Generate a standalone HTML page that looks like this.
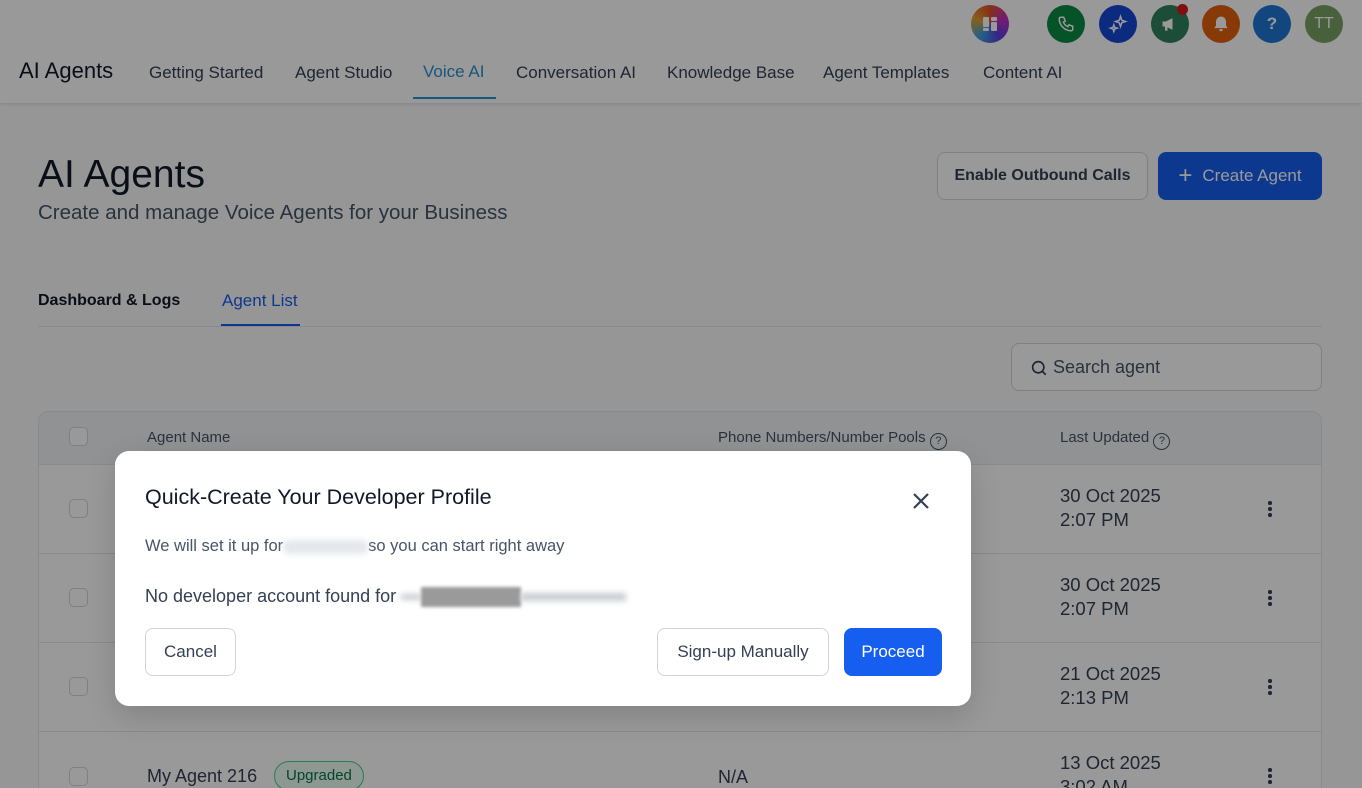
<!DOCTYPE html>
<html style="height:788px;overflow:hidden"><head><meta charset="utf-8"><style>
*{box-sizing:border-box;margin:0;padding:0}
body{width:1362px;height:788px;overflow:hidden;background:#fafafa;font-family:"Liberation Sans",sans-serif;color:#101828;position:relative}
.abs{position:absolute}
.hdr{position:absolute;left:0;top:0;width:1362px;height:103px;background:#fff;box-shadow:0 1px 3px rgba(0,0,0,.12)}
.ic{position:absolute;top:5px;width:38px;height:38px;border-radius:50%;display:flex;align-items:center;justify-content:center;color:#fff;font-size:17px}
.nav{position:absolute;top:63px;font-size:17px;color:#344054}
.btn{position:absolute;border-radius:8px;display:flex;align-items:center;justify-content:center;font-size:17px}
.row{position:absolute;left:39px;width:1283px;border-top:1px solid #e4e7ec}
.cb{position:absolute;left:69px;width:19px;height:19px;border:1.5px solid #d0d5dd;border-radius:5px;background:#fff}
.date{position:absolute;left:1060px;font-size:18.5px;color:#344054;line-height:24px}
.dots{position:absolute;left:1268px;width:4px}
.dots i{display:block;width:3.5px;height:3.5px;border-radius:50%;background:#344054;margin-bottom:2.5px}
.ov{position:absolute;left:0;top:0;width:1362px;height:788px;background:rgba(0,0,0,.4)}
.modal{position:absolute;left:115px;top:451px;width:856px;height:255px;background:#fff;border-radius:14px;box-shadow:0 10px 30px rgba(0,0,0,.15)}
.blur{display:inline-block;vertical-align:middle;filter:blur(3px)}
</style></head><body>
<div class="hdr">
  <div class="ic" style="left:971px;background:conic-gradient(#e0502a,#c02fc0,#5b3ee0,#3aa0e0,#e0a030,#e0502a)"><svg width="20" height="20" viewBox="0 0 20 20"><rect x="3" y="3" width="6" height="10" rx="1" fill="#fff"/><rect x="3" y="14" width="6" height="3" rx="1" fill="#fff"/><rect x="11" y="3" width="6" height="4" rx="1" fill="#fff"/><rect x="11" y="8" width="6" height="9" rx="1" fill="#fff"/></svg></div>
  <div class="ic" style="left:1047px;background:#0b8a44"><svg width="18" height="18" viewBox="0 0 24 24" fill="none" stroke="#fff" stroke-width="2"><path d="M5 3h4l2 5-2.5 1.5a11 11 0 0 0 6 6L16 13l5 2v4a2 2 0 0 1-2 2A16 16 0 0 1 3 5a2 2 0 0 1 2-2"/></svg></div>
  <div class="ic" style="left:1099px;background:#1447d6"><svg width="20" height="20" viewBox="0 0 24 24" fill="none" stroke="#fff" stroke-width="1.8"><path d="M15 3l1.5 4.5L21 9l-4.5 1.5L15 15l-1.5-4.5L9 9l4.5-1.5z"/><path d="M7 13l1 3 3 1-3 1-1 3-1-3-3-1 3-1z"/></svg></div>
  <div class="ic" style="left:1151px;background:#2f8060"><svg width="20" height="20" viewBox="0 0 24 24" fill="#fff"><path d="M3 9h4l8-4v14l-8-4H3z"/><rect x="6" y="15" width="3" height="5"/></svg></div>
  <div class="abs" style="left:1177px;top:4px;width:11px;height:11px;border-radius:50%;background:#d51a1a"></div>
  <div class="ic" style="left:1202px;background:#e1620c"><svg width="20" height="20" viewBox="0 0 24 24" fill="#fff"><path d="M12 3a6 6 0 0 1 6 6v5l2 3H4l2-3V9a6 6 0 0 1 6-6z"/><rect x="10" y="18" width="4" height="2.5" rx="1"/></svg></div>
  <div class="ic" style="left:1253px;background:#1d76d2;font-weight:bold">?</div>
  <div class="ic" style="left:1305px;background:#7aa066;font-size:16px">TT</div>
  <div class="abs" style="left:19px;top:58px;font-size:22px;color:#101828">AI Agents</div>
  <div class="nav" style="left:149px">Getting Started</div>
  <div class="nav" style="left:295px">Agent Studio</div>
  <div class="nav" style="left:423px;color:#2b8fd3;top:62px">Voice AI</div>
  <div class="abs" style="left:413px;top:97px;width:83px;height:2px;background:#2b8fd3"></div>
  <div class="nav" style="left:516px">Conversation AI</div>
  <div class="nav" style="left:667px">Knowledge Base</div>
  <div class="nav" style="left:823px">Agent Templates</div>
  <div class="nav" style="left:983px">Content AI</div>
</div>
<div class="abs" style="left:38px;top:153px;font-size:39px;color:#101828">AI Agents</div>
<div class="abs" style="left:38px;top:201px;font-size:20.5px;color:#475467">Create and manage Voice Agents for your Business</div>
<div class="btn" style="left:937px;top:152px;width:211px;height:48px;border:1px solid #d0d5dd;background:#fff;color:#344054;font-weight:bold;font-size:16px">Enable Outbound Calls</div>
<div class="btn" style="left:1158px;top:152px;width:164px;height:48px;background:#155eef;color:#fff"><span style="font-size:24px;margin-right:10px;font-weight:300">+</span>Create Agent</div>
<div class="abs" style="left:38px;top:292px;font-size:16px;font-weight:bold;color:#101828">Dashboard &amp; Logs</div>
<div class="abs" style="left:222px;top:291px;font-size:17px;color:#155eef">Agent List</div>
<div class="abs" style="left:38px;top:326px;width:1284px;height:1px;background:#e4e7ec"></div>
<div class="abs" style="left:221px;top:324px;width:79px;height:2px;background:#155eef"></div>
<div class="abs" style="left:1011px;top:343px;width:311px;height:48px;border:1px solid #d0d5dd;border-radius:8px;background:#fff;font-size:18px;color:#475467;padding:13px 0 0 41px">Search agent
  <svg class="abs" style="left:18px;top:15px" width="18" height="18" viewBox="0 0 24 24" fill="none" stroke="#344054" stroke-width="2.2"><circle cx="11" cy="11" r="7.5"/><path d="M16.5 16.5L21 21"/></svg></div>
<div class="abs" style="left:38px;top:411px;width:1284px;height:400px;border:1px solid #e4e7ec;border-radius:10px;background:#fff;overflow:hidden">
  <div style="height:53px;background:#f2f4f7"></div>
</div>
<div class="cb" style="top:427px"></div>
<div class="abs" style="left:147px;top:429px;font-size:15px;color:#475467">Agent Name</div>
<div class="abs" style="left:718px;top:429px;font-size:15px;color:#475467">Phone Numbers/Number Pools <span style="display:inline-block;width:17px;height:17px;border:1.5px solid #475467;border-radius:50%;font-size:11px;text-align:center;line-height:14px;vertical-align:-2px">?</span></div>
<div class="abs" style="left:1060px;top:429px;font-size:15px;color:#475467">Last Updated <span style="display:inline-block;width:17px;height:17px;border:1.5px solid #475467;border-radius:50%;font-size:11px;text-align:center;line-height:14px;vertical-align:-2px">?</span></div>
<div class="row" style="top:464px"></div>
<div class="row" style="top:553px"></div>
<div class="row" style="top:642px"></div>
<div class="row" style="top:731px"></div>
<div class="cb" style="top:499px"></div><div class="cb" style="top:588px"></div><div class="cb" style="top:677px"></div><div class="cb" style="top:767px"></div>
<div class="date" style="top:484px">30 Oct 2025<br>2:07 PM</div>
<div class="date" style="top:573px">30 Oct 2025<br>2:07 PM</div>
<div class="date" style="top:662px">21 Oct 2025<br>2:13 PM</div>
<div class="date" style="top:751px">13 Oct 2025<br>3:02 AM</div>
<div class="dots" style="top:501px"><i></i><i></i><i></i></div>
<div class="dots" style="top:590px"><i></i><i></i><i></i></div>
<div class="dots" style="top:679px"><i></i><i></i><i></i></div>
<div class="dots" style="top:768px"><i></i><i></i><i></i></div>
<div class="abs" style="left:147px;top:766px;font-size:18px;color:#344054">My Agent 216</div>
<div class="abs" style="left:274px;top:761px;height:30px;padding:0 11px;border:1.5px solid #47cd89;border-radius:15px;background:#ecfdf3;color:#067647;font-size:15px;line-height:27px">Upgraded</div>
<div class="abs" style="left:718px;top:767px;font-size:18px;color:#344054">N/A</div>
<div class="ov"></div>
<div class="modal">
  <div class="abs" style="left:30px;top:34px;font-size:21.5px;color:#101828">Quick-Create Your Developer Profile</div>
  <svg class="abs" style="left:797px;top:41px" width="18" height="18" viewBox="0 0 18 18" stroke="#344054" stroke-width="2.2"><path d="M2 2l14 14M16 2L2 16"/></svg>
  <div class="abs" style="left:30px;top:86px;font-size:16.5px;color:#475467;white-space:nowrap">We will set it up for<span class="blur" style="width:85px;height:14px;background:#e4e7ec;border-radius:6px"></span>so you can start right away</div>
  <div class="abs" style="left:30px;top:135px;font-size:18px;color:#344054;white-space:nowrap">No developer account found for <span class="blur" style="width:20px;height:6px;background:#c8ccd2"></span><span class="blur" style="width:100px;height:20px;background:#9a9a9a;filter:blur(1.5px)"></span><span class="blur" style="width:105px;height:8px;background:#c8ccd2"></span></div>
  <div class="btn" style="left:30px;top:177px;width:91px;height:48px;border:1px solid #d0d5dd;background:#fff;color:#344054">Cancel</div>
  <div class="btn" style="left:542px;top:177px;width:172px;height:48px;border:1px solid #d0d5dd;background:#fff;color:#344054">Sign-up Manually</div>
  <div class="btn" style="left:729px;top:177px;width:98px;height:48px;background:#155eef;color:#fff">Proceed</div>
</div>
</body></html>
